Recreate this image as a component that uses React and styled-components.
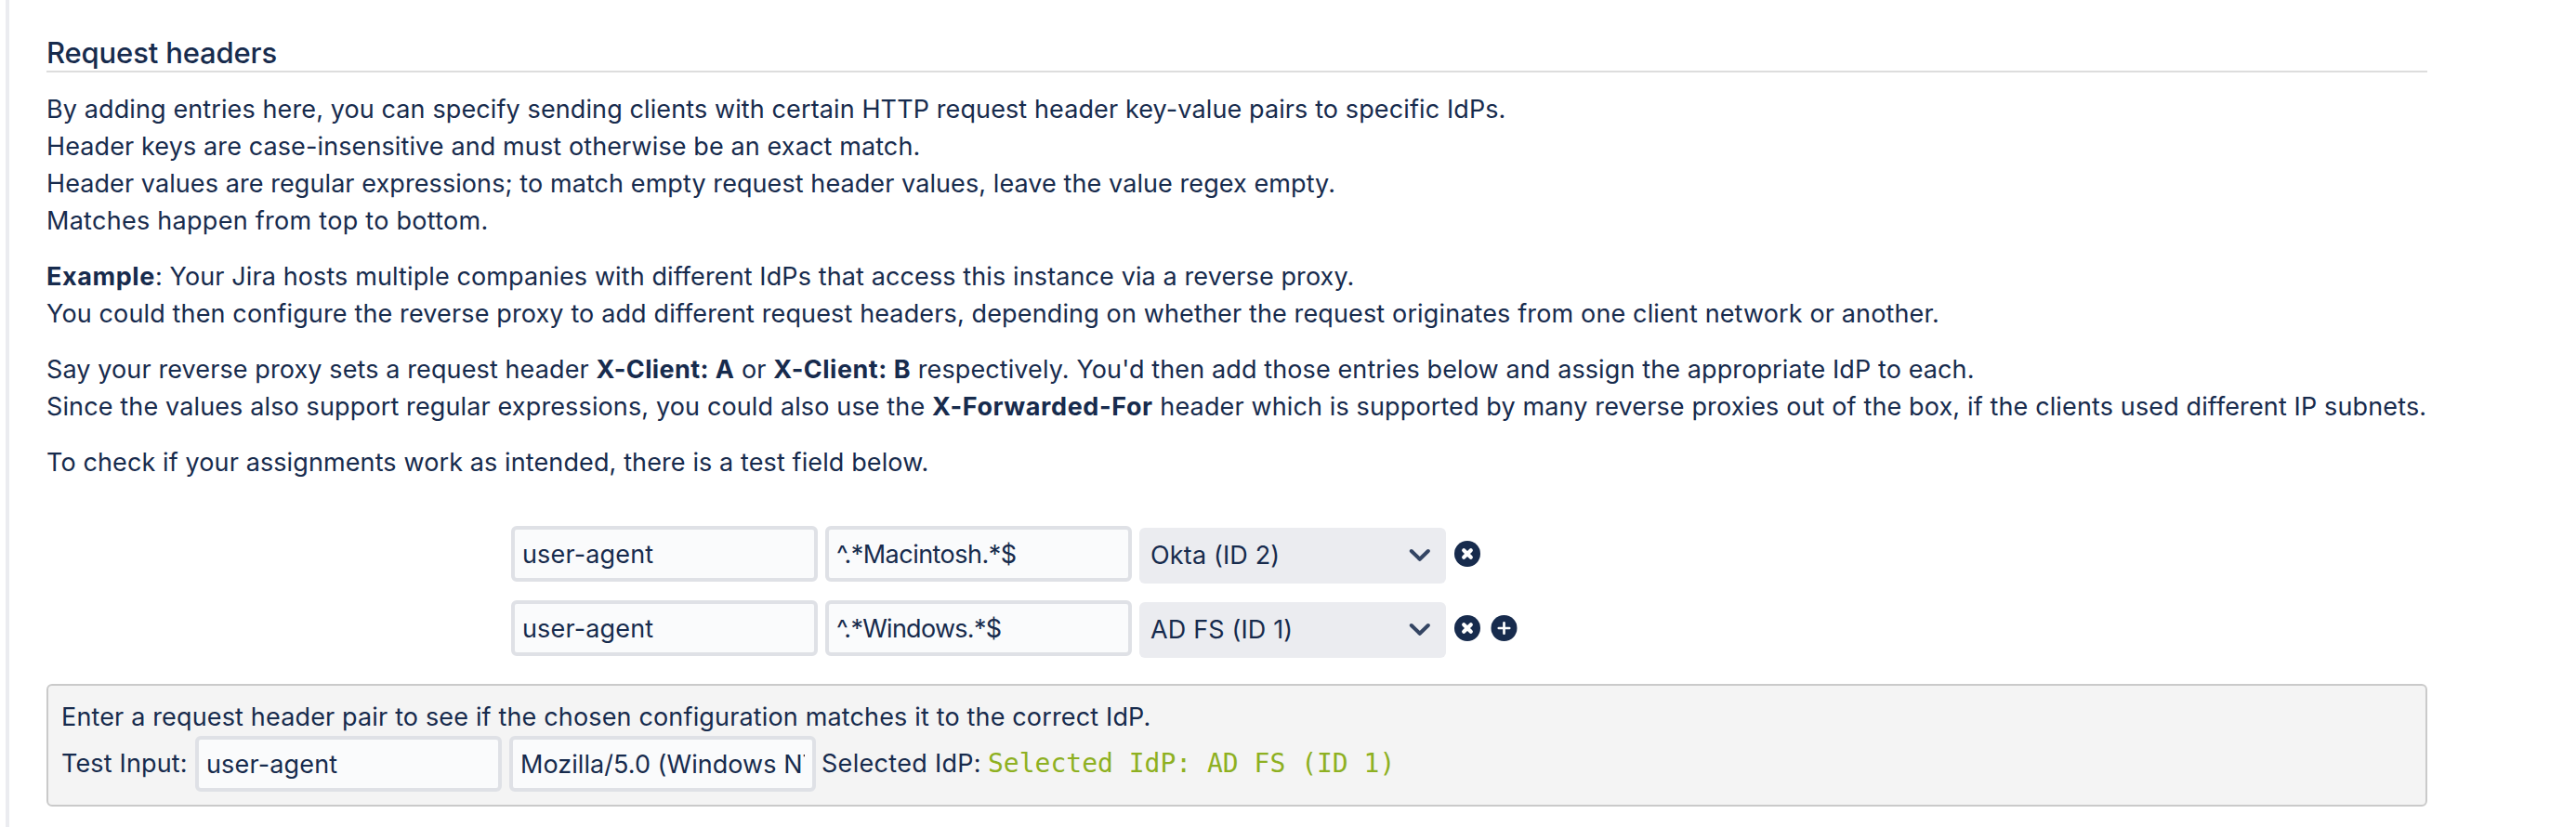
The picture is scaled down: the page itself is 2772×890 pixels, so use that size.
import React from 'react'
import styled, { createGlobalStyle } from 'styled-components'

const colors = {
  text: '#172b4d',
  border: '#dfe1e6',
  inputBg: '#fafbfc',
  selectBg: '#ebecf0',
  line: '#dddddd',
  green: '#8eb021',
}

const GlobalStyle = createGlobalStyle`
  * {
    box-sizing: border-box;
  }
  body {
    margin: 0;
    background: #fff;
    color: ${colors.text};
    font-family: Inter, 'Liberation Sans', sans-serif;
    font-size: 27px;
    line-height: 40px;
    letter-spacing: 0.12px;
  }
`

const Page = styled.main`
  height: 890px;
  margin-left: 6px;
  padding: 36px 0 0 40px;
  border-left: 4px solid ${colors.selectBg};
  overflow: hidden;
`

const Content = styled.section`
  width: 2562px;
`

const Title = styled.h2`
  height: 42px;
  margin: 0 0 20px;
  border-bottom: 2px solid ${colors.line};
  font-size: 31px;
  font-weight: 500;
  line-height: 42px;
  letter-spacing: -0.15px;
`

const Paragraph = styled.p`
  margin: 0 0 20px;
`

const Line = styled.span`
  display: block;
  white-space: nowrap;
  letter-spacing: ${(props) => props.$spacing || 0.11}px;
`

const Strong = styled.b`
  letter-spacing: ${(props) => props.$spacing || 0.6}px;
`

const Entries = styled.div`
  display: flex;
  flex-direction: column;
  gap: 18px;
  margin: 48px 0 28px 500px;
`

const EntryRow = styled.div`
  display: flex;
  align-items: flex-start;
  gap: 8px;
`

const Input = styled.input`
  width: 330px;
  height: 60px;
  padding: 0 8px;
  border: 4px solid ${colors.border};
  border-radius: 6px;
  outline: none;
  background: ${colors.inputBg};
  color: inherit;
  font: inherit;
  letter-spacing: ${(props) => props.$spacing || 0.15}px;
`

const Select = styled.button`
  display: flex;
  align-items: center;
  justify-content: space-between;
  width: 330px;
  height: 60px;
  margin-top: 2px;
  padding: 0 16px 0 12px;
  border: 0;
  border-radius: 6px;
  background: ${colors.selectBg};
  color: inherit;
  font: inherit;
  letter-spacing: 0.15px;
`

const Actions = styled.div`
  display: flex;
  gap: 11px;
  padding: 16px 0 0 1px;
  svg {
    display: block;
  }
`

const TestBox = styled.div`
  height: 132px;
  padding: 14px 14px 0;
  border: 2px solid #cacaca;
  border-radius: 6px;
  background: #f4f4f4;
`

const TestRow = styled.div`
  display: flex;
  align-items: center;
  gap: 8px;
`

const Label = styled.label`
  width: 136px;
  white-space: nowrap;
  letter-spacing: 0.15px;
`

const ResultLabel = styled(Label)`
  width: 171px;
  margin-left: -2px;
  letter-spacing: 0.3px;
`

const Result = styled.code`
  color: ${colors.green};
  font-family: 'DejaVu Sans Mono', monospace;
  font-size: 28px;
  letter-spacing: 0;
`

const Chevron = () => (
  <svg width="24" height="16" viewBox="0 0 24 16" fill="none">
    <path
      d="M2.8 3L11.8 11.8L20.8 3"
      stroke="#344563"
      strokeWidth="4"
      strokeLinecap="round"
      strokeLinejoin="round"
    />
  </svg>
)

const RemoveIcon = () => (
  <svg width="28" height="28" viewBox="0 0 28 28">
    <circle cx="14" cy="14" r="14" fill={colors.text} />
    <path
      d="M10.2 10.2L17.8 17.8M17.8 10.2L10.2 17.8"
      stroke="#fff"
      strokeWidth="4.2"
      strokeLinecap="round"
    />
  </svg>
)

const AddIcon = () => (
  <svg width="29" height="28" viewBox="0 0 29 28">
    <circle cx="14.5" cy="14" r="14" fill={colors.text} />
    <path
      d="M14.5 8.3V19.7M8.8 14H20.2"
      stroke="#fff"
      strokeWidth="2.7"
      strokeLinecap="round"
    />
  </svg>
)

const entries = [
  { header: 'user-agent', value: '^.*Macintosh.*$', idp: 'Okta (ID 2)', spacing: -0.53 },
  { header: 'user-agent', value: '^.*Windows.*$', idp: 'AD FS (ID 1)', spacing: -0.72 },
]

export default function App() {
  return (
    <>
      <GlobalStyle />
      <Page>
        <Content>
          <Title>Request headers</Title>
          <Paragraph>
            <Line>
              By adding entries here, you can specify sending clients with certain HTTP request header
              key-value pairs to specific IdPs.
            </Line>
            <Line>Header keys are case-insensitive and must otherwise be an exact match.</Line>
            <Line $spacing={0.08}>
              Header values are regular expressions; to match empty request header values, leave the
              value regex empty.
            </Line>
            <Line $spacing={0.28}>Matches happen from top to bottom.</Line>
          </Paragraph>
          <Paragraph>
            <Line>
              <Strong>Example</Strong>: Your Jira hosts multiple companies with different IdPs that
              access this instance via a reverse proxy.
            </Line>
            <Line $spacing={0.136}>
              You could then configure the reverse proxy to add different request headers, depending
              on whether the request originates from one client network or another.
            </Line>
          </Paragraph>
          <Paragraph>
            <Line>
              Say your reverse proxy sets a request header{' '}
              <Strong $spacing={0.4}>X-Client: A</Strong> or{' '}
              <Strong $spacing={0.5}>X-Client: B</Strong> respectively. You'd then add those entries
              below and assign the appropriate IdP to each.
            </Line>
            <Line $spacing={0.13}>
              Since the values also support regular expressions, you could also use the{' '}
              <Strong>X-Forwarded-For</Strong> header which is supported by many reverse proxies out
              of the box, if the clients used different IP subnets.
            </Line>
          </Paragraph>
          <Paragraph>
            <Line>To check if your assignments work as intended, there is a test field below.</Line>
          </Paragraph>
          <Entries>
            {entries.map((entry, index) => (
              <EntryRow key={entry.value}>
                <Input defaultValue={entry.header} />
                <Input defaultValue={entry.value} $spacing={entry.spacing} />
                <Select>
                  {entry.idp}
                  <Chevron />
                </Select>
                <Actions>
                  <RemoveIcon />
                  {index === entries.length - 1 && <AddIcon />}
                </Actions>
              </EntryRow>
            ))}
          </Entries>
          <TestBox>
            <Line $spacing={0.155}>
              Enter a request header pair to see if the chosen configuration matches it to the correct
              IdP.
            </Line>
            <TestRow>
              <Label>Test Input:</Label>
              <Input defaultValue="user-agent" />
              <Input defaultValue="Mozilla/5.0 (Windows NT 10.0; Win64; x64)" $spacing={0.05} />
              <ResultLabel>Selected IdP:</ResultLabel>
              <Result>Selected IdP: AD FS (ID 1)</Result>
            </TestRow>
          </TestBox>
        </Content>
      </Page>
    </>
  )
}
